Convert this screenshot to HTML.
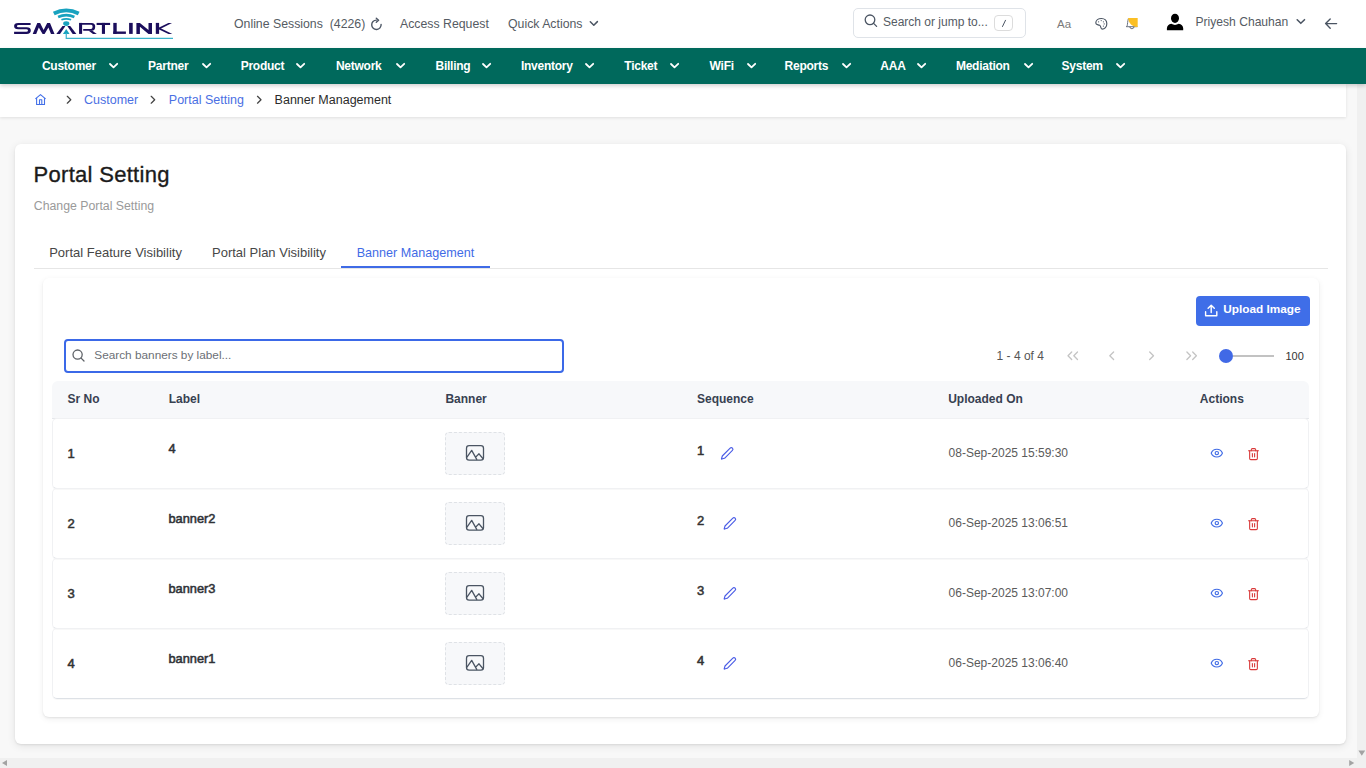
<!DOCTYPE html>
<html><head><meta charset="utf-8">
<style>
*{box-sizing:border-box;margin:0;padding:0}
html,body{width:1366px;height:768px;overflow:hidden;background:#f8f8f8;font-family:"Liberation Sans",sans-serif}
.a{position:absolute}
.t{position:absolute;line-height:1;white-space:nowrap}
svg{position:absolute;overflow:visible}
#hdr{left:0;top:0;width:1366px;height:48px;background:#fff}
#nav{left:0;top:48px;width:1366px;height:36px;background:#00695c;box-shadow:0 2px 4px rgba(0,0,0,.18);z-index:5}
#nav .t{color:#fff;font-weight:700;font-size:12px;top:12px;letter-spacing:-0.25px}
#bc{left:0;top:84px;width:1346px;height:33px;background:#fff;box-shadow:0 1px 3px rgba(0,0,0,.10);z-index:2}
#card{left:15px;top:143.5px;width:1331px;height:600.3px;background:#fff;border-radius:6px;box-shadow:0 1px 2px rgba(0,0,0,.08),0 2px 8px rgba(0,0,0,.09)}
#inner{left:42.5px;top:277.5px;width:1276px;height:439.5px;background:#fff;border-radius:6px;box-shadow:0 1px 2px rgba(0,0,0,.07),0 2px 6px rgba(0,0,0,.07)}
.hd{color:#555b63;font-size:12.3px}
</style></head>
<body>
<div id="hdr" class="a"></div>

<!-- logo -->
<svg width="200" height="48" style="left:0;top:0" viewBox="0 0 200 48">
 <g fill="#1b0e5c">
  <path d="M14.1,22.9 H30.6 V25 H18.6 Q16.9,25 16.9,26.2 Q16.9,27.2 18.6,27.2 H26.6 Q30.8,27.2 30.8,30.5 Q30.8,33.9 26.6,33.9 H14.1 V31.8 H26.3 Q28,31.8 28,30.55 Q28,29.3 26.3,29.3 H18.2 Q14.1,29.3 14.1,26.1 Q14.1,22.9 18.2,22.9 Z"/>
  <path d="M32.7,33.9 L37.3,22.9 L40.1,22.9 L43.6,30.0 L47.2,22.9 L50.0,22.9 L54.5,33.9 L51.0,33.9 L48.4,27.4 L44.6,33.9 L42.6,33.9 L38.8,27.4 L36.2,33.9 Z"/>
  <path d="M56.3,33.9 L62.5,26.1 L65.4,26.1 L60.0,33.9 Z"/>
  <path d="M67.3,26.1 L70.2,26.1 L76.4,33.9 L72.7,33.9 Z"/>
  <rect x="79.05" y="22.9" width="3.05" height="11"/>
  <path d="M80,22.9 H91.6 Q95.2,22.9 95.2,26.4 Q95.2,30.7 91.6,30.7 H83.2 V28.9 H91.2 Q92.6,28.9 92.6,26.8 Q92.6,24.8 91.2,24.8 H80 Z"/>
  <path d="M88.4,30.5 L92,30.5 L96.8,33.9 L93.0,33.9 Z"/>
  <rect x="96.6" y="22.9" width="13.5" height="2.1"/>
  <rect x="101.9" y="22.9" width="3.1" height="11"/>
  <rect x="113.3" y="22.9" width="3.4" height="11"/>
  <rect x="113.3" y="31.5" width="12.6" height="2.4"/>
  <rect x="129.1" y="22.9" width="3.6" height="11"/>
  <path d="M136.4,33.9 V22.9 H139.9 L148.5,30.0 V22.9 H152 V33.9 H148.5 L139.9,26.8 V33.9 Z"/>
  <rect x="155.8" y="22.9" width="3.3" height="11"/>
  <path d="M159.1,27.4 L168.4,22.9 L172,22.9 L159.1,29.6 Z"/>
  <path d="M159.1,27.4 L172.3,33.9 L168.5,33.9 L159.1,29.4 Z"/>
 </g>
 <g fill="#18a2bf">
  <ellipse cx="66.25" cy="23.6" rx="3.1" ry="2.3"/>
  <path d="M62.9,33.9 L66.25,29.1 L69.6,33.9 Z"/>
 </g>
 <g fill="none" stroke="#18a2bf">
  <path d="M66.25,33 V38.3 H173" stroke-width="1.2" stroke="#3bb3cc"/>
  <path d="M61.4,19.75 Q66.25,17.85 71.1,19.75" stroke-width="1.8"/>
  <path d="M58.1,16.9 Q66.25,13.3 74.4,16.9" stroke-width="2.7"/>
  <path d="M53.8,13.5 Q66.25,7.1 78.7,13.5" stroke-width="3.8"/>
 </g>
</svg>

<div class="t hd" style="left:234px;top:18px">Online Sessions&nbsp; (4226)</div>
<div class="t hd" style="left:400px;top:18px">Access Request</div>
<div class="t hd" style="left:508px;top:18px">Quick Actions</div>
<div class="a" style="left:852.5px;top:8px;width:173.5px;height:30px;border:1px solid #dfe3e8;border-radius:5px;background:#fff"></div>
<div class="t hd" style="left:883px;top:15.8px;font-size:12px">Search or jump to...</div>
<div class="a" style="left:994.4px;top:15.2px;width:19px;height:15.5px;border:1px solid #dcdcdc;border-radius:4px"></div>
<div class="t" style="left:1057px;top:18.5px;font-size:11.5px;color:#7a7a7a">Aa</div>
<div class="t hd" style="left:1195.5px;top:15.9px;font-size:12.1px">Priyesh Chauhan</div>
<svg width="1366" height="48" style="left:0;top:0;z-index:6" viewBox="0 0 1366 48">
 <g fill="none" stroke="#4b5563" stroke-width="1.4" stroke-linecap="round" stroke-linejoin="round">
  <path d="M376.4,20.1 A4.7,4.7 0 1 0 381.1,24.4"/>
  <path d="M376.3,18.3 L378.6,20.2 L376.3,22.2"/>
  <path d="M590.3,21.8 L593.8,25.2 L597.4,21.6" stroke-width="1.5"/>
  <circle cx="870" cy="19.8" r="4.8" stroke-width="1.3"/>
  <path d="M873.6,23.4 L876.6,26.4" stroke-width="1.3"/>
  <path d="M1005.5,20.3 L1002.5,26.5" stroke-width="1"/>
  <path transform="translate(1101.4,24) scale(0.92) translate(-1101.4,-24)" d="M1095.3,23 C1095.3,20 1098,18 1101.5,18 C1105,18 1107.3,20.5 1107.3,23.7 C1107.3,27 1105,29.5 1102.2,29.5 C1100.3,29.5 1101.3,26.3 1099.5,25.4 C1097.8,24.6 1095.3,25.2 1095.3,23 Z" stroke-width="1.25"/>
  <path d="M1128.3,18.8 C1127.6,21 1127.6,24 1127.2,25.8 L1126.2,26.7 H1137" stroke-width="1" stroke="#6b7280"/>
  <path d="M1129.9,27.3 Q1131.9,30.3 1133.9,27.3" stroke-width="1.1" stroke="#6b7280"/>
  <path d="M1297.2,19.8 L1300.8,23.3 L1304.5,19.7" stroke-width="1.6"/>
  <path d="M1325.6,23.6 H1336.6 M1330.2,19.1 L1325.6,23.6 L1330.2,28.2" stroke-width="1.4"/>
 </g>
 <g fill="#4b5563">
  <circle cx="1098.6" cy="21.8" r="0.6"/><circle cx="1101.2" cy="20.6" r="0.6"/><circle cx="1103.4" cy="21.8" r="0.6"/><circle cx="1104.2" cy="23.9" r="0.6"/><circle cx="1103.4" cy="26.1" r="0.6"/>
 </g>
 <path d="M1128.2,18 H1137.7 V27.1 C1132.5,27 1128.2,23 1128.2,18 Z" fill="#fbbf24"/>
 <g fill="#000">
  <ellipse cx="1175" cy="18.3" rx="4" ry="4.6"/>
  <path d="M1166.9,30.2 V28.3 Q1167.3,24.6 1171.3,23.8 Q1175,26 1178.7,23.8 Q1182.8,24.6 1183.2,28.3 V30.2 Z"/>
 </g>
</svg>


<div id="nav" class="a">
<div class="t" style="left:41.9px">Customer</div><svg style="left:108.6px;top:14px" width="10" height="8" viewBox="0 0 10 8"><path d="M1,2 L4.5,5.4 L8.2,1.8" fill="none" stroke="#fff" stroke-width="1.8" stroke-linecap="round" stroke-linejoin="round"/></svg>
<div class="t" style="left:148.1px">Partner</div><svg style="left:202.0px;top:14px" width="10" height="8" viewBox="0 0 10 8"><path d="M1,2 L4.5,5.4 L8.2,1.8" fill="none" stroke="#fff" stroke-width="1.8" stroke-linecap="round" stroke-linejoin="round"/></svg>
<div class="t" style="left:240.7px">Product</div><svg style="left:296.4px;top:14px" width="10" height="8" viewBox="0 0 10 8"><path d="M1,2 L4.5,5.4 L8.2,1.8" fill="none" stroke="#fff" stroke-width="1.8" stroke-linecap="round" stroke-linejoin="round"/></svg>
<div class="t" style="left:335.9px">Network</div><svg style="left:395.8px;top:14px" width="10" height="8" viewBox="0 0 10 8"><path d="M1,2 L4.5,5.4 L8.2,1.8" fill="none" stroke="#fff" stroke-width="1.8" stroke-linecap="round" stroke-linejoin="round"/></svg>
<div class="t" style="left:435.5px">Billing</div><svg style="left:481.7px;top:14px" width="10" height="8" viewBox="0 0 10 8"><path d="M1,2 L4.5,5.4 L8.2,1.8" fill="none" stroke="#fff" stroke-width="1.8" stroke-linecap="round" stroke-linejoin="round"/></svg>
<div class="t" style="left:520.9px">Inventory</div><svg style="left:584.6px;top:14px" width="10" height="8" viewBox="0 0 10 8"><path d="M1,2 L4.5,5.4 L8.2,1.8" fill="none" stroke="#fff" stroke-width="1.8" stroke-linecap="round" stroke-linejoin="round"/></svg>
<div class="t" style="left:624.3px">Ticket</div><svg style="left:670.0px;top:14px" width="10" height="8" viewBox="0 0 10 8"><path d="M1,2 L4.5,5.4 L8.2,1.8" fill="none" stroke="#fff" stroke-width="1.8" stroke-linecap="round" stroke-linejoin="round"/></svg>
<div class="t" style="left:709.6px">WiFi</div><svg style="left:746.7px;top:14px" width="10" height="8" viewBox="0 0 10 8"><path d="M1,2 L4.5,5.4 L8.2,1.8" fill="none" stroke="#fff" stroke-width="1.8" stroke-linecap="round" stroke-linejoin="round"/></svg>
<div class="t" style="left:784.6px">Reports</div><svg style="left:841.7px;top:14px" width="10" height="8" viewBox="0 0 10 8"><path d="M1,2 L4.5,5.4 L8.2,1.8" fill="none" stroke="#fff" stroke-width="1.8" stroke-linecap="round" stroke-linejoin="round"/></svg>
<div class="t" style="left:880.3px">AAA</div><svg style="left:916.8px;top:14px" width="10" height="8" viewBox="0 0 10 8"><path d="M1,2 L4.5,5.4 L8.2,1.8" fill="none" stroke="#fff" stroke-width="1.8" stroke-linecap="round" stroke-linejoin="round"/></svg>
<div class="t" style="left:955.9px">Mediation</div><svg style="left:1023.7px;top:14px" width="10" height="8" viewBox="0 0 10 8"><path d="M1,2 L4.5,5.4 L8.2,1.8" fill="none" stroke="#fff" stroke-width="1.8" stroke-linecap="round" stroke-linejoin="round"/></svg>
<div class="t" style="left:1061.6px">System</div><svg style="left:1116.0px;top:14px" width="10" height="8" viewBox="0 0 10 8"><path d="M1,2 L4.5,5.4 L8.2,1.8" fill="none" stroke="#fff" stroke-width="1.8" stroke-linecap="round" stroke-linejoin="round"/></svg>
</div>

<!-- breadcrumb -->
<div id="bc" class="a">
</div>
<svg width="400" height="33" style="left:0;top:84px;z-index:3" viewBox="0 84 400 33">
 <g fill="none" stroke="#4470e8" stroke-width="1.1" stroke-linejoin="round">
  <path d="M35.4,98.9 L40.5,94.6 L45.6,98.9"/>
  <path d="M36.6,97.9 V104.5 H44.5 V97.9"/>
  <path d="M39.5,104.5 V99.8 H41.8 V104.5"/>
 </g>
 <g fill="none" stroke="#444" stroke-width="1.25" stroke-linecap="round" stroke-linejoin="round">
  <path d="M67.3,96.3 L70.8,99.7 L67.3,103.2"/>
  <path d="M151.2,96.3 L154.7,99.7 L151.2,103.2"/>
  <path d="M257.5,96.3 L261,99.7 L257.5,103.2"/>
 </g>
</svg>
<div class="t" style="z-index:3;left:84px;top:94.0px;font-size:12.5px;color:#4a6fe3">Customer</div>
<div class="t" style="z-index:3;left:168.8px;top:94.0px;font-size:12.5px;color:#4a6fe3">Portal Setting</div>
<div class="t" style="z-index:3;left:274.6px;top:94.0px;font-size:12.5px;color:#2b2b2b">Banner Management</div>

<div id="card" class="a"></div>
<div class="t" style="left:33.5px;top:164.0px;font-size:22px;letter-spacing:0.3px;color:#1b1b1b;-webkit-text-stroke:0.35px #1b1b1b">Portal Setting</div>
<div class="t" style="left:33.8px;top:200.19px;font-size:12.3px;color:#9a9a9a">Change Portal Setting</div>
<div class="t" style="left:49.2px;top:245.90px;font-size:13px;color:#474747">Portal Feature Visibility</div>
<div class="t" style="left:212px;top:245.90px;font-size:13px;color:#474747">Portal Plan Visibility</div>
<div class="t" style="left:356.7px;top:247.0px;font-size:12.6px;color:#3f6be6">Banner Management</div>
<div class="a" style="left:34px;top:268px;width:1294px;height:1px;background:#e6e6e6"></div>
<div class="a" style="left:341px;top:266px;width:148.5px;height:2px;background:#3f6be6"></div>

<div id="inner" class="a"></div>

<div class="a" style="left:1196.3px;top:296px;width:113.4px;height:29.7px;background:#3f6ee8;border-radius:4px"></div>
<div class="t" style="left:1223.2px;top:304.0px;font-size:11.8px;font-weight:700;color:#fff">Upload Image</div>
<div class="a" style="left:63.5px;top:339px;width:500px;height:34px;border:2px solid #3b69e8;border-radius:4px;background:#fff"></div>
<div class="t" style="left:94.3px;top:350.01px;font-size:11.8px;color:#6b6f76">Search banners by label...</div>
<div class="t" style="left:996.6px;top:349.74px;font-size:12px;color:#555">1 - 4 of 4</div>
<div class="a" style="left:1233px;top:355px;width:41px;height:2px;background:#c2c2c2"></div>
<div class="a" style="left:1219.1px;top:348.8px;width:14px;height:14px;border-radius:50%;background:#4169e6"></div>
<div class="t" style="left:1285.5px;top:350.69px;font-size:11px;color:#333">100</div>
<div class="a" style="left:52px;top:380.5px;width:1257px;height:38px;background:#f7f8fa;border-radius:6px 6px 0 0;border-bottom:1px solid #e5e7eb"></div>

<div class="t" style="left:67.6px;top:392.74px;font-size:12px;font-weight:700;color:#374151">Sr No</div>
<div class="t" style="left:168.7px;top:392.74px;font-size:12px;font-weight:700;color:#374151">Label</div>
<div class="t" style="left:445.4px;top:392.74px;font-size:12px;font-weight:700;color:#374151">Banner</div>
<div class="t" style="left:697px;top:392.74px;font-size:12px;font-weight:700;color:#374151">Sequence</div>
<div class="t" style="left:948.2px;top:392.74px;font-size:12px;font-weight:700;color:#374151">Uploaded On</div>
<div class="t" style="left:1199.8px;top:392.74px;font-size:12px;font-weight:700;color:#374151">Actions</div>
<div class="a" style="left:52px;top:418px;width:1257px;height:71px;border-radius:5px;border:1px solid #f0f1f3;border-bottom:1px solid #dde1e6;box-shadow:0 1px 1px rgba(0,0,0,.03)"></div>
<div class="t" style="left:67.6px;top:446.90px;font-size:13px;color:#333;-webkit-text-stroke:0.55px #333">1</div>
<div class="t" style="left:168.5px;top:442.96px;font-size:12.8px;color:#2f3237;-webkit-text-stroke:0.55px #2f3237">4</div>
<div class="a" style="left:445px;top:432.3px;width:60px;height:43px;background:#f7f8fa;border:1px dashed #dfe2e6;border-radius:4px"></div>
<div class="t" style="left:697px;top:444.00px;font-size:13px;color:#333;-webkit-text-stroke:0.55px #333">1</div>
<div class="t" style="left:948.6px;top:447.34px;font-size:12px;color:#5b5b5b">08-Sep-2025 15:59:30</div>
<div class="a" style="left:52px;top:488px;width:1257px;height:71px;border-radius:5px;border:1px solid #f0f1f3;border-bottom:1px solid #dde1e6;box-shadow:0 1px 1px rgba(0,0,0,.03)"></div>
<div class="t" style="left:67.6px;top:516.90px;font-size:13px;color:#333;-webkit-text-stroke:0.55px #333">2</div>
<div class="t" style="left:168.5px;top:512.96px;font-size:12.8px;color:#2f3237;-webkit-text-stroke:0.55px #2f3237">banner2</div>
<div class="a" style="left:445px;top:502.3px;width:60px;height:43px;background:#f7f8fa;border:1px dashed #dfe2e6;border-radius:4px"></div>
<div class="t" style="left:697px;top:514.00px;font-size:13px;color:#333;-webkit-text-stroke:0.55px #333">2</div>
<div class="t" style="left:948.6px;top:517.34px;font-size:12px;color:#5b5b5b">06-Sep-2025 13:06:51</div>
<div class="a" style="left:52px;top:558px;width:1257px;height:71px;border-radius:5px;border:1px solid #f0f1f3;border-bottom:1px solid #dde1e6;box-shadow:0 1px 1px rgba(0,0,0,.03)"></div>
<div class="t" style="left:67.6px;top:586.90px;font-size:13px;color:#333;-webkit-text-stroke:0.55px #333">3</div>
<div class="t" style="left:168.5px;top:582.96px;font-size:12.8px;color:#2f3237;-webkit-text-stroke:0.55px #2f3237">banner3</div>
<div class="a" style="left:445px;top:572.3px;width:60px;height:43px;background:#f7f8fa;border:1px dashed #dfe2e6;border-radius:4px"></div>
<div class="t" style="left:697px;top:584.00px;font-size:13px;color:#333;-webkit-text-stroke:0.55px #333">3</div>
<div class="t" style="left:948.6px;top:587.34px;font-size:12px;color:#5b5b5b">06-Sep-2025 13:07:00</div>
<div class="a" style="left:52px;top:628px;width:1257px;height:71px;border-radius:5px;border:1px solid #f0f1f3;border-bottom:1px solid #dde1e6;box-shadow:0 1px 1px rgba(0,0,0,.03)"></div>
<div class="t" style="left:67.6px;top:656.90px;font-size:13px;color:#333;-webkit-text-stroke:0.55px #333">4</div>
<div class="t" style="left:168.5px;top:652.96px;font-size:12.8px;color:#2f3237;-webkit-text-stroke:0.55px #2f3237">banner1</div>
<div class="a" style="left:445px;top:642.3px;width:60px;height:43px;background:#f7f8fa;border:1px dashed #dfe2e6;border-radius:4px"></div>
<div class="t" style="left:697px;top:654.00px;font-size:13px;color:#333;-webkit-text-stroke:0.55px #333">4</div>
<div class="t" style="left:948.6px;top:657.34px;font-size:12px;color:#5b5b5b">06-Sep-2025 13:06:40</div>
<svg width="1366" height="768" style="left:0;top:0;z-index:8" viewBox="0 0 1366 768">
<g fill="none" stroke="#fff" stroke-width="1.4" stroke-linecap="round" stroke-linejoin="round"><path d="M1205.6,311.8 V315.7 H1216.8 V311.8"/><path d="M1211.2,312.6 V305.4 M1208.1,308.3 L1211.2,305.2 L1214.3,308.3"/></g>
<g fill="none" stroke="#5f6368" stroke-width="1.3" stroke-linecap="round"><circle cx="77.6" cy="354.6" r="4.6"/><path d="M81.1,358.1 L84,361"/></g>
<g fill="none" stroke="#c4c4c4" stroke-width="1.3" stroke-linecap="round" stroke-linejoin="round"><path d="M1071.7,352 L1068,355.7 L1071.7,359.5 M1077.5,352 L1073.8,355.7 L1077.5,359.5"/><path d="M1113.6,352 L1109.8,355.7 L1113.6,359.5"/><path d="M1149.7,352 L1153.5,355.7 L1149.7,359.5"/><path d="M1186.9,352 L1190.6,355.7 L1186.9,359.5 M1192.7,352 L1196.4,355.7 L1192.7,359.5"/></g>
<g fill="none" stroke="#4b5563" stroke-width="1.3" stroke-linejoin="round"><rect x="466.5" y="445.6" width="17" height="14.6" rx="2.6"/><path d="M466.8,457.4 L471.7,450.4 L477,459.9 M475.2,457.6 L479,453.8 L483.3,459"/></g>
<g transform="translate(720.35,446.55) scale(0.57)" fill="none" stroke="#4a5ce6" stroke-width="2" stroke-linecap="round" stroke-linejoin="round"><path d="M21.174 6.812a1 1 0 0 0-3.986-3.987L3.842 16.174a2 2 0 0 0-.5.83l-1.321 4.352a.5.5 0 0 0 .623.622l4.353-1.32a2 2 0 0 0 .83-.497z"/></g>
<g transform="translate(1210.1,446.4) scale(0.56)" fill="none" stroke="#3f6be6" stroke-width="2" stroke-linecap="round" stroke-linejoin="round"><path d="M2.062 12.348a1 1 0 0 1 0-.696 10.75 10.75 0 0 1 19.876 0 1 1 0 0 1 0 .696 10.75 10.75 0 0 1-19.876 0"/><circle cx="12" cy="12" r="3"/></g>
<g transform="translate(1246.9,447.5) scale(0.55)" fill="none" stroke="#d93a3a" stroke-width="2" stroke-linecap="round" stroke-linejoin="round"><path d="M3 6h18"/><path d="M19 6v14c0 1-1 2-2 2H7c-1 0-2-1-2-2V6"/><path d="M8 6V4c0-1 1-2 2-2h4c1 0 2 1 2 2v2"/><line x1="10" x2="10" y1="11" y2="17"/><line x1="14" x2="14" y1="11" y2="17"/></g>
<g fill="none" stroke="#4b5563" stroke-width="1.3" stroke-linejoin="round"><rect x="466.5" y="515.6" width="17" height="14.6" rx="2.6"/><path d="M466.8,527.4 L471.7,520.4 L477,529.9 M475.2,527.6 L479,523.8 L483.3,529"/></g>
<g transform="translate(723.05,516.55) scale(0.57)" fill="none" stroke="#4a5ce6" stroke-width="2" stroke-linecap="round" stroke-linejoin="round"><path d="M21.174 6.812a1 1 0 0 0-3.986-3.987L3.842 16.174a2 2 0 0 0-.5.83l-1.321 4.352a.5.5 0 0 0 .623.622l4.353-1.32a2 2 0 0 0 .83-.497z"/></g>
<g transform="translate(1210.1,516.4) scale(0.56)" fill="none" stroke="#3f6be6" stroke-width="2" stroke-linecap="round" stroke-linejoin="round"><path d="M2.062 12.348a1 1 0 0 1 0-.696 10.75 10.75 0 0 1 19.876 0 1 1 0 0 1 0 .696 10.75 10.75 0 0 1-19.876 0"/><circle cx="12" cy="12" r="3"/></g>
<g transform="translate(1246.9,517.5) scale(0.55)" fill="none" stroke="#d93a3a" stroke-width="2" stroke-linecap="round" stroke-linejoin="round"><path d="M3 6h18"/><path d="M19 6v14c0 1-1 2-2 2H7c-1 0-2-1-2-2V6"/><path d="M8 6V4c0-1 1-2 2-2h4c1 0 2 1 2 2v2"/><line x1="10" x2="10" y1="11" y2="17"/><line x1="14" x2="14" y1="11" y2="17"/></g>
<g fill="none" stroke="#4b5563" stroke-width="1.3" stroke-linejoin="round"><rect x="466.5" y="585.6" width="17" height="14.6" rx="2.6"/><path d="M466.8,597.4 L471.7,590.4 L477,599.9 M475.2,597.6 L479,593.8 L483.3,599"/></g>
<g transform="translate(723.05,586.55) scale(0.57)" fill="none" stroke="#4a5ce6" stroke-width="2" stroke-linecap="round" stroke-linejoin="round"><path d="M21.174 6.812a1 1 0 0 0-3.986-3.987L3.842 16.174a2 2 0 0 0-.5.83l-1.321 4.352a.5.5 0 0 0 .623.622l4.353-1.32a2 2 0 0 0 .83-.497z"/></g>
<g transform="translate(1210.1,586.4) scale(0.56)" fill="none" stroke="#3f6be6" stroke-width="2" stroke-linecap="round" stroke-linejoin="round"><path d="M2.062 12.348a1 1 0 0 1 0-.696 10.75 10.75 0 0 1 19.876 0 1 1 0 0 1 0 .696 10.75 10.75 0 0 1-19.876 0"/><circle cx="12" cy="12" r="3"/></g>
<g transform="translate(1246.9,587.5) scale(0.55)" fill="none" stroke="#d93a3a" stroke-width="2" stroke-linecap="round" stroke-linejoin="round"><path d="M3 6h18"/><path d="M19 6v14c0 1-1 2-2 2H7c-1 0-2-1-2-2V6"/><path d="M8 6V4c0-1 1-2 2-2h4c1 0 2 1 2 2v2"/><line x1="10" x2="10" y1="11" y2="17"/><line x1="14" x2="14" y1="11" y2="17"/></g>
<g fill="none" stroke="#4b5563" stroke-width="1.3" stroke-linejoin="round"><rect x="466.5" y="655.6" width="17" height="14.6" rx="2.6"/><path d="M466.8,667.4 L471.7,660.4 L477,669.9 M475.2,667.6 L479,663.8 L483.3,669"/></g>
<g transform="translate(723.05,656.55) scale(0.57)" fill="none" stroke="#4a5ce6" stroke-width="2" stroke-linecap="round" stroke-linejoin="round"><path d="M21.174 6.812a1 1 0 0 0-3.986-3.987L3.842 16.174a2 2 0 0 0-.5.83l-1.321 4.352a.5.5 0 0 0 .623.622l4.353-1.32a2 2 0 0 0 .83-.497z"/></g>
<g transform="translate(1210.1,656.4) scale(0.56)" fill="none" stroke="#3f6be6" stroke-width="2" stroke-linecap="round" stroke-linejoin="round"><path d="M2.062 12.348a1 1 0 0 1 0-.696 10.75 10.75 0 0 1 19.876 0 1 1 0 0 1 0 .696 10.75 10.75 0 0 1-19.876 0"/><circle cx="12" cy="12" r="3"/></g>
<g transform="translate(1246.9,657.5) scale(0.55)" fill="none" stroke="#d93a3a" stroke-width="2" stroke-linecap="round" stroke-linejoin="round"><path d="M3 6h18"/><path d="M19 6v14c0 1-1 2-2 2H7c-1 0-2-1-2-2V6"/><path d="M8 6V4c0-1 1-2 2-2h4c1 0 2 1 2 2v2"/><line x1="10" x2="10" y1="11" y2="17"/><line x1="14" x2="14" y1="11" y2="17"/></g>
</svg>



<div class="a" style="left:1357px;top:84px;width:9px;height:684px;background:#f0f0f0;z-index:4"></div>
<div class="a" style="left:0;top:758px;width:1366px;height:10px;background:#f0f0f0;z-index:4"></div>
<svg width="1366" height="768" style="left:0;top:0;z-index:9" viewBox="0 0 1366 768">
 <g fill="#a3a3a3">
  <path d="M1358.4,750.6 H1365.2 L1361.8,755.8 Z"/>
  <path d="M1349.2,760 V765.9 L1354.2,762.95 Z"/>
  <path d="M7,760 V765.9 L2,762.95 Z"/>
 </g>
</svg>
</body></html>
